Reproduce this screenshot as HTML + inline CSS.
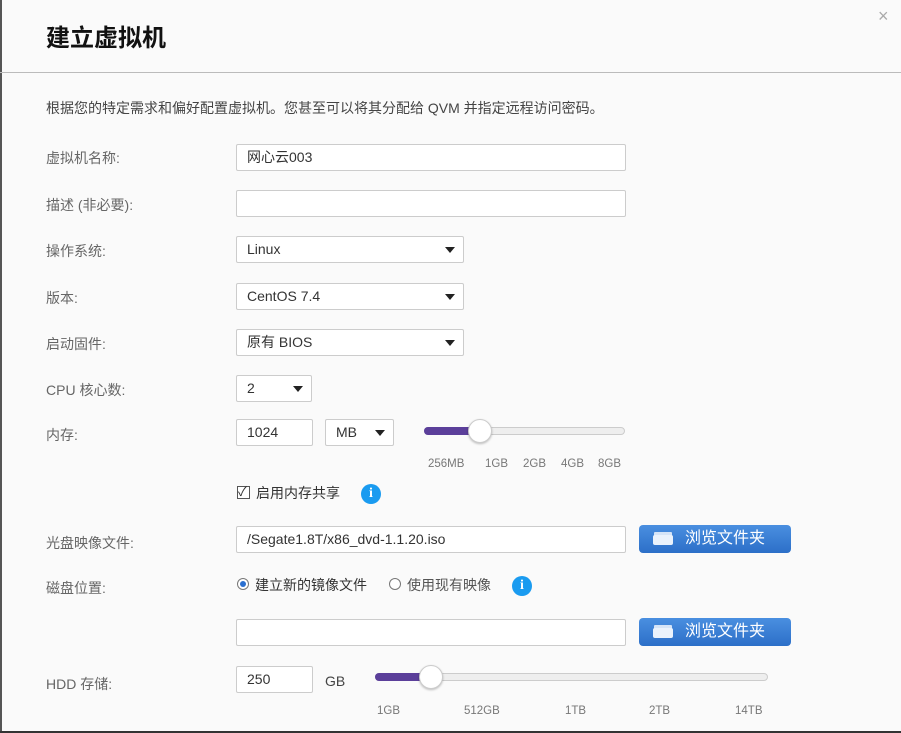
<!DOCTYPE html>
<html><head><meta charset="utf-8"><style>
body{margin:0;width:901px;height:733px;background:#fafafa;position:relative;overflow:hidden;font-family:"Liberation Sans","Noto Sans CJK SC",sans-serif;color:#555}
.a{position:absolute}
.l{position:absolute;left:46px;font-size:14px;color:#666}
.in{position:absolute;background:#fff;border:1px solid #ccc;border-radius:2px;box-sizing:border-box;font-size:14px;color:#333;padding-left:10px;line-height:25px}
.sel::after{content:"";position:absolute;right:8px;top:10px;border-left:5px solid transparent;border-right:5px solid transparent;border-top:6px solid #222}
.btn{position:absolute;left:639px;width:152px;height:28px;background:linear-gradient(#4a8fe0,#2c6fc8);border-radius:4px;color:#fff;font-size:16px;line-height:28px;box-sizing:border-box;padding-left:46px}
.btn::before{content:"";position:absolute;left:14px;top:10px;width:20px;height:10px;background:#eaf2fc;border-radius:2px;box-shadow:0 -4px 0 -1px #d5e4f7}
.tk{position:absolute;font-size:11.5px;color:#777}
.info{position:absolute;width:20px;height:20px;border-radius:50%;background:#1a9bf0;color:#fff;font:bold 14px/20px "Liberation Serif",serif;text-align:center}
.track{position:absolute;height:8px;border:1px solid #ccc;border-radius:5px;background:#eee;box-sizing:border-box}
.fill{position:absolute;height:8px;background:#5b3f9a;border-radius:5px}
.thumb{position:absolute;width:24px;height:24px;border-radius:50%;background:#fff;border:1px solid #ccc;box-shadow:0 1px 2px rgba(0,0,0,.25);box-sizing:border-box}
</style></head><body>
<div class="a" style="left:0;top:0;width:2px;height:733px;background:#555"></div>
<div class="a" style="left:0;top:731px;width:901px;height:2px;background:#333"></div>
<div class="a" style="left:878px;top:6px;font-size:18px;color:#aaa">×</div>
<div class="a" style="left:46px;top:18px;font-size:24px;font-weight:bold;color:#111">建立虚拟机</div>
<div class="a" style="left:0;top:72px;width:901px;height:1px;background:#bbb"></div>
<div class="a" style="left:46px;top:98px;font-size:14px;color:#444">根据您的特定需求和偏好配置虚拟机。您甚至可以将其分配给 QVM 并指定远程访问密码。</div>

<div class="l" style="top:148px">虚拟机名称:</div>
<div class="in" style="left:236px;top:144px;width:390px;height:27px">网心云003</div>
<div class="l" style="top:195px">描述 (非必要):</div>
<div class="in" style="left:236px;top:190px;width:390px;height:27px"></div>
<div class="l" style="top:241px">操作系统:</div>
<div class="in sel" style="left:236px;top:236px;width:228px;height:27px">Linux</div>
<div class="l" style="top:288px">版本:</div>
<div class="in sel" style="left:236px;top:283px;width:228px;height:27px">CentOS 7.4</div>
<div class="l" style="top:334px">启动固件:</div>
<div class="in sel" style="left:236px;top:329px;width:228px;height:27px">原有 BIOS</div>
<div class="l" style="top:380px">CPU 核心数:</div>
<div class="in sel" style="left:236px;top:375px;width:76px;height:27px">2</div>
<div class="l" style="top:425px">内存:</div>
<div class="in" style="left:236px;top:419px;width:77px;height:27px">1024</div>
<div class="in sel" style="left:325px;top:419px;width:69px;height:27px">MB</div>
<div class="track" style="left:424px;top:427px;width:201px"></div>
<div class="fill" style="left:424px;top:427px;width:56px"></div>
<div class="thumb" style="left:468px;top:419px"></div>
<div class="tk" style="left:428px;top:458px">256MB</div>
<div class="tk" style="left:485px;top:458px">1GB</div>
<div class="tk" style="left:523px;top:458px">2GB</div>
<div class="tk" style="left:561px;top:458px">4GB</div>
<div class="tk" style="left:598px;top:458px">8GB</div>
<div class="a" style="left:237px;top:486px;width:11px;height:11px;border:1px solid #555;background:#fff"></div>
<div class="a" style="left:238px;top:481px;font-size:13px;color:#333">✓</div>
<div class="a" style="left:256px;top:483px;font-size:14px;color:#333">启用内存共享</div>
<div class="info" style="left:361px;top:484px">i</div>

<div class="l" style="top:533px">光盘映像文件:</div>
<div class="in" style="left:236px;top:526px;width:390px;height:27px;font-size:14px">/Segate1.8T/x86_dvd-1.1.20.iso</div>
<div class="btn" style="top:525px">浏览文件夹</div>
<div class="l" style="top:578px">磁盘位置:</div>
<div class="a" style="left:237px;top:578px;width:10px;height:10px;border:1px solid #777;border-radius:50%;background:#fff"></div>
<div class="a" style="left:240px;top:581px;width:6px;height:6px;border-radius:50%;background:#2a6fd0"></div>
<div class="a" style="left:255px;top:575px;font-size:14px;color:#333">建立新的镜像文件</div>
<div class="a" style="left:389px;top:578px;width:10px;height:10px;border:1px solid #777;border-radius:50%;background:#fff"></div>
<div class="a" style="left:407px;top:575px;font-size:14px;color:#555">使用现有映像</div>
<div class="info" style="left:512px;top:576px">i</div>
<div class="in" style="left:236px;top:619px;width:390px;height:27px"></div>
<div class="btn" style="top:618px">浏览文件夹</div>
<div class="l" style="top:674px">HDD 存储:</div>
<div class="in" style="left:236px;top:666px;width:77px;height:27px">250</div>
<div class="a" style="left:325px;top:673px;font-size:14px;color:#444">GB</div>
<div class="track" style="left:375px;top:673px;width:393px"></div>
<div class="fill" style="left:375px;top:673px;width:56px"></div>
<div class="thumb" style="left:419px;top:665px"></div>
<div class="tk" style="left:377px;top:705px">1GB</div>
<div class="tk" style="left:464px;top:705px">512GB</div>
<div class="tk" style="left:565px;top:705px">1TB</div>
<div class="tk" style="left:649px;top:705px">2TB</div>
<div class="tk" style="left:735px;top:705px">14TB</div>
</body></html>
